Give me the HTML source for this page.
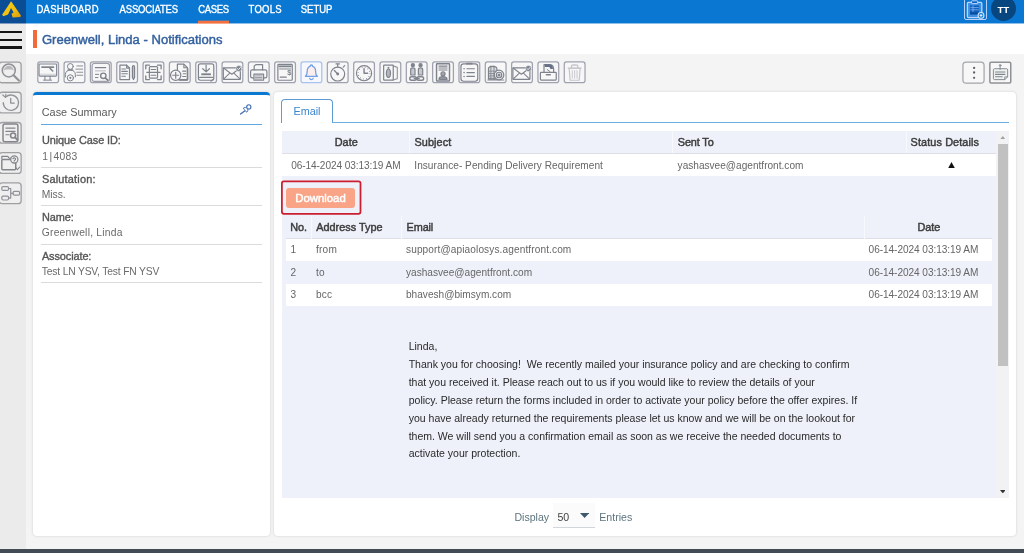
<!DOCTYPE html>
<html lang="en">
<head>
<meta charset="utf-8">
<title>Greenwell, Linda - Notifications</title>
<style>
*{box-sizing:border-box;margin:0;padding:0}
html,body{width:1024px;height:553px;overflow:hidden}
body{position:relative;background:#f4f4f4;font-family:"Liberation Sans",sans-serif;font-size:11px;color:#444}
.a,.t{position:absolute}
.t{white-space:pre;display:block}
.ib{position:absolute;width:22.6px;height:22.6px;border:1.5px solid #9a9dab;border-radius:2.5px;background:#f7f7f8}
.ib svg{position:absolute;left:-1.2px;top:-1.2px;width:22px;height:22px;overflow:visible}
.sb{position:absolute;left:-2px;width:24px;height:22px;border:1.3px solid #a0a0a3;border-radius:3px;background:#efefef}
.sb svg{position:absolute;left:.7px;top:-1.3px;width:22px;height:22px;overflow:visible}
.card{position:absolute;background:#fff;border-radius:4px;box-shadow:0 0 2.5px rgba(0,0,0,.17)}
.hr{position:absolute;height:1px;background:#dbdbdb;left:41px;width:221px}
svg *{vector-effect:none}
</style>
</head>
<body>
<div id="app" style="position:absolute;left:0;top:0;width:1024px;height:553px;will-change:transform">
<div class="a" style="left:0;top:0;width:1024px;height:23px;background:#0a78d3"></div>
<div class="a" style="left:0;top:0;width:26px;height:23px;background:#0b4d94"></div>
<div class="a" style="left:0;top:23px;width:26px;height:526px;background:#ebebeb"></div>
<div class="a" style="left:26px;top:23px;width:998px;height:30.800px;background:#fff"></div>
<div class="a" style="left:26px;top:23px;width:998px;height:1px;background:#8cc0ea"></div>
<div class="a" style="left:0;top:23px;width:26px;height:1px;background:#7b9cc0"></div>
<div class="a" style="left:0;top:549.1px;width:1024px;height:4px;background:#424b53"></div>

<!-- nav underline -->
<div class="a" style="left:198px;top:21px;width:31px;height:2px;background:#f4703f"></div>
<div class="a" style="left:198px;top:23px;width:31px;height:1px;background:#f8a98c"></div>
<div class="a" style="left:198px;top:20px;width:31px;height:1px;background:#5577a8"></div>
<!-- title accent -->
<div class="a" style="left:33.4px;top:30.2px;width:3.2px;height:18.3px;background:#f26a3b"></div>
<!-- hamburger -->
<div class="a" style="left:0;top:31.3px;width:22.3px;height:2.2px;background:#141414"></div>
<div class="a" style="left:0;top:38.9px;width:22.3px;height:2.2px;background:#141414"></div>
<div class="a" style="left:0;top:46.4px;width:22.3px;height:2.2px;background:#141414"></div>

<!-- LEFT CARD -->
<div class="card" style="left:33.3px;top:91.5px;width:236.400px;height:444.500px;border-top:3.2px solid #0b78d1"></div>
<div class="a" style="left:41px;top:124.3px;width:221px;height:1.1px;background:#62a8e0"></div>
<div class="hr" style="top:166.7px"></div>
<div class="hr" style="top:205.2px"></div>
<div class="hr" style="top:243.7px"></div>
<div class="hr" style="top:282.2px"></div>

<svg class="a" style="left:240px;top:104.4px" width="12" height="11" viewBox="0 0 12 11" fill="none" stroke="#3f6db3" stroke-linecap="round" stroke-linejoin="round"><path d="M4.700 6.900L.5 10" stroke-width="1.300"/><path d="M3.800 5.200l3 3 1-1.600-.2-.8 1.200-1.200-2.200-2.200-1.200 1.200-.8-.2z" stroke-width="1" fill="#fff"/><circle cx="8.800" cy="2.900" r="2.100" stroke-width="1.100" fill="#fff"/></svg>
<!-- RIGHT CARD -->
<div class="card" style="left:274.200px;top:91.500px;width:742.300px;height:444.500px"></div>
<div class="a" style="left:281.3px;top:99px;width:51.4px;height:24.2px;border:1.2px solid #5f9bd3;border-bottom:none;border-radius:4px 4px 0 0;background:#fff"></div>
<div class="a" style="left:331.5px;top:122.2px;width:677.5px;height:1.2px;background:#6aaee3"></div>

<!-- outer table -->
<div class="a" style="left:281.5px;top:131px;width:727.5px;height:22.6px;background:#eef1f9"></div>
<div class="a" style="left:281.5px;top:153.2px;width:714.300px;height:.8px;background:#dcdfe6"></div>
<div class="a" style="left:281.5px;top:154px;width:714.300px;height:22px;background:#fff"></div>
<div class="a" style="left:281.5px;top:176px;width:716px;height:321.8px;background:#eef1fa"></div>
<div class="a" style="left:409.2px;top:131px;width:1px;height:22px;background:#f8f9fd"></div>
<div class="a" style="left:672px;top:131px;width:1px;height:22px;background:#f8f9fd"></div>
<div class="a" style="left:905.5px;top:131px;width:1px;height:22px;background:#f8f9fd"></div>
<svg class="a" style="left:948px;top:161.8px" width="7" height="6.4" viewBox="0 0 7 6.4"><path d="M3.5 0L7 6.4H0z" fill="#111"/></svg>

<!-- download -->
<svg class="a" style="left:279px;top:178px" width="86" height="40" viewBox="279 178 86 40"><rect x="281.900" y="181.350" width="78.600" height="32.500" rx="2" fill="none" stroke="#cb1f30" stroke-width="1.750"/></svg>
<div class="a" style="left:286.2px;top:187.6px;width:68.8px;height:20.3px;background:#f9a487;border-radius:3px"></div>

<!-- inner table -->
<div class="a" style="left:285.8px;top:238px;width:706.4px;height:.8px;background:#dcdfe6"></div>
<div class="a" style="left:285.8px;top:238.8px;width:706.4px;height:22.4px;background:#fff"></div>
<div class="a" style="left:285.8px;top:283.8px;width:706.4px;height:22px;background:#fff"></div>
<div class="a" style="left:311px;top:215.5px;width:1px;height:23px;background:#f8f9fd"></div>
<div class="a" style="left:401px;top:215.5px;width:1px;height:23px;background:#f8f9fd"></div>
<div class="a" style="left:864px;top:215.5px;width:1px;height:23px;background:#f8f9fd"></div>

<!-- scrollbar -->
<div class="a" style="left:996px;top:131px;width:13px;height:366.800px;background:#f2f2f5"></div>
<div class="a" style="left:998px;top:143.5px;width:9.600px;height:222.500px;background:#c1c1c1"></div>
<svg class="a" style="left:999.8px;top:135.5px" width="5.6" height="3.4" viewBox="0 0 5.6 3.4"><path d="M2.8 0L5.6 3.4H0z" fill="#a3a3a3"/></svg>
<svg class="a" style="left:999.8px;top:489.5px" width="5.6" height="3.4" viewBox="0 0 5.6 3.4"><path d="M0 0H5.6L2.8 3.4z" fill="#333"/></svg>

<!-- footer select -->
<div class="a" style="left:553px;top:503px;width:41.5px;height:24.5px;background:#fbfbfb;border-bottom:1px solid #d2d5d9"></div>
<svg class="a" style="left:579.6px;top:512.6px" width="9.2" height="5.2" viewBox="0 0 9.2 5.2"><path d="M0 0H9.2L4.6 4.900z" fill="#3c5a6c"/></svg>

<svg class="a" style="left:0;top:0;overflow:hidden" width="1024" height="553" viewBox="0 0 1024 553"><g transform="translate(37.15 61.35)"><rect x="0.625" y="0.625" width="20.75" height="20.75" rx="2.2" fill="#f7f7f8" stroke="#9fa2ae" stroke-width="1.25"/><g fill="none" stroke="#7f838c" stroke-width="1" stroke-linecap="round" stroke-linejoin="round"><rect x="1.900" y="2.600" width="17.600" height="12.200" rx=".8" stroke-width="1.100"/><path d="M2.400 12.900h16.600" stroke-width=".6" stroke-opacity=".55"/><path d="M4.200 5.800H17" stroke-width="1.700" stroke-linecap="butt"/><path d="M12.900 7l2.700 2.700" stroke-width="1.500"/><path d="M7.800 15v3.400M12.900 15v3.400M6.400 18.800h8"/></g></g><g transform="translate(63.47 61.35)"><rect x="0.625" y="0.625" width="20.75" height="20.75" rx="2.2" fill="#f7f7f8" stroke="#9fa2ae" stroke-width="1.25"/><g fill="none" stroke="#7f838c" stroke-width="1" stroke-linecap="round" stroke-linejoin="round"><circle cx="6.900" cy="5.100" r="2.900"/><path d="M1.900 15.600v-2.400c0-2.800 2-4.400 5-4.400s5 1.600 5 4.400v2.400"/><path d="M4.600 8.600h4.600" stroke-width="1.300"/><circle cx="6.900" cy="16.500" r="3.100" fill="#f7f7f8"/><circle cx="6.900" cy="16.500" r="1.100" fill="#7f838c" stroke="none"/><path d="M13.400 4.600h5.800M12.400 7.800h6.800M13.400 10.900h5.800M13.400 13.900h5.800" stroke-width=".9"/></g></g><g transform="translate(89.80 61.35)"><rect x="0.625" y="0.625" width="20.75" height="20.75" rx="2.2" fill="#f7f7f8" stroke="#9fa2ae" stroke-width="1.25"/><g fill="none" stroke="#7f838c" stroke-width="1" stroke-linecap="round" stroke-linejoin="round"><rect x="2.300" y="2.100" width="17.400" height="18" rx="2.200" stroke-opacity=".75" stroke-width="1.200"/><path d="M5.600 6.300h10.200" stroke-width="1.400"/><path d="M5.600 9.500h10.200" stroke-width=".9" stroke-opacity=".6"/><path d="M5.600 13h3.200M5.600 16.200h2.600" stroke-width="1"/><circle cx="13.500" cy="14.500" r="2.700" stroke-width="1.400"/><path d="M15.700 16.700l2.300 2.100" stroke-width="1.800"/></g></g><g transform="translate(116.12 61.35)"><rect x="0.625" y="0.625" width="20.75" height="20.75" rx="2.2" fill="#f7f7f8" stroke="#9fa2ae" stroke-width="1.25"/><g fill="none" stroke="#7f838c" stroke-width="1" stroke-linecap="round" stroke-linejoin="round" transform="translate(11 11) scale(1.2) translate(-11 -11)"><path d="M5 5h5.6l2.4 2.4V17H5z"/><path d="M10.6 5v2.4H13"/><path d="M6.6 8.2h3M6.6 10.2h4.6M6.6 12.2h4.6M6.6 14.2h3" stroke-width=".9"/><path d="M15.4 6.6c0-1.6 1.8-1.6 1.8 0V15l-.9 2-.9-2z" fill="#7f838c" fill-opacity=".45"/></g></g><g transform="translate(142.45 61.35)"><rect x="0.625" y="0.625" width="20.75" height="20.75" rx="2.2" fill="#f7f7f8" stroke="#9fa2ae" stroke-width="1.25"/><g fill="none" stroke="#7f838c" stroke-width="1" stroke-linecap="round" stroke-linejoin="round" transform="translate(11 11) scale(1.2) translate(-11 -11)"><path d="M4.6 8V5h3M14.4 5h3v3M17.4 14v3h-3M7.6 17h-3v-3" stroke-width="1.1"/><rect x="7.6" y="6.2" width="6.8" height="9.6" rx=".8"/><path d="M5.4 11h11.2M9 8.6h4M9 13.4h4" stroke-width=".9"/></g></g><g transform="translate(168.78 61.35)"><rect x="0.625" y="0.625" width="20.75" height="20.75" rx="2.2" fill="#f7f7f8" stroke="#9fa2ae" stroke-width="1.25"/><g fill="none" stroke="#7f838c" stroke-width="1" stroke-linecap="round" stroke-linejoin="round" transform="translate(11 11) scale(1.2) translate(-11 -11)"><path d="M9 16.800V4.200h5.400l3 3V17z" fill="#f7f7f8"/><path d="M14.400 4.200v3h3" stroke-width=".9"/><path d="M10 17.300h7.600" stroke-width="1.600" stroke-linecap="butt"/><path d="M17.500 8v9" stroke-width="1.300"/><path d="M13.400 10h2.600M13.800 12.200h2.200M13.400 14.400h2.600" stroke-width=".9"/><circle cx="7.600" cy="13.400" r="4.300" fill="#f7f7f8"/><path d="M7.600 10.900v5M5.100 13.400h5"/></g></g><g transform="translate(195.10 61.35)"><rect x="0.625" y="0.625" width="20.75" height="20.75" rx="2.2" fill="#f7f7f8" stroke="#9fa2ae" stroke-width="1.25"/><g fill="none" stroke="#7f838c" stroke-width="1" stroke-linecap="round" stroke-linejoin="round" transform="translate(11 11) scale(1.2) translate(-11 -11)"><rect x="4.6" y="4" width="12.8" height="13.6" rx="1.6"/><path d="M11 5v5.400M8.200 8l2.800 2.600 2.800-2.600"/><path d="M7 12.6h8" stroke-width="1.6" stroke-linecap="butt"/><path d="M5.6 15.2h10.8" stroke-width=".9"/><path d="M15 18.4l2-1.6" stroke-width=".9"/></g></g><g transform="translate(221.43 61.35)"><rect x="0.625" y="0.625" width="20.75" height="20.75" rx="2.2" fill="#f7f7f8" stroke="#9fa2ae" stroke-width="1.25"/><g fill="none" stroke="#7f838c" stroke-width="1" stroke-linecap="round" stroke-linejoin="round" transform="translate(11 11) scale(1.2) translate(-11 -11)"><rect x="3.400" y="7.200" width="14.200" height="9.600" rx=".4"/><path d="M3.600 7.400l6.900 5.200 6.900-5.200M3.600 16.600l5.200-5M17.400 16.600l-5.200-5" stroke-width=".9"/><circle cx="16.400" cy="7.800" r="2.500" fill="#7f8491" stroke="#f7f7f8" stroke-width=".4"/><path d="M15.300 7.900l.8.800 1.500-1.700" stroke="#f7f7f8" stroke-width=".8"/></g></g><g transform="translate(247.75 61.35)"><rect x="0.625" y="0.625" width="20.75" height="20.75" rx="2.2" fill="#f7f7f8" stroke="#9fa2ae" stroke-width="1.25"/><g fill="none" stroke="#7f838c" stroke-width="1" stroke-linecap="round" stroke-linejoin="round" transform="translate(11 11) scale(1.2) translate(-11 -11)"><path d="M7.2 9V5.6l1.4-1h5.6V9"/><rect x="4.2" y="9" width="13.6" height="6.6" rx="1.4"/><rect x="7" y="12.4" width="8" height="5.2" fill="#f7f7f8"/><path d="M8.2 14h5.6M8.2 15.4h5.6M8.2 16.6h5.6" stroke-width=".7"/></g></g><g transform="translate(274.07 61.35)"><rect x="0.625" y="0.625" width="20.75" height="20.75" rx="2.2" fill="#f7f7f8" stroke="#9fa2ae" stroke-width="1.25"/><g fill="none" stroke="#7f838c" stroke-width="1" stroke-linecap="round" stroke-linejoin="round" transform="translate(11 11) scale(1.2) translate(-11 -11)"><rect x="5" y="4.4" width="12" height="13.2" rx=".6"/><path d="M5.6 6h10.8" stroke-width="1.5" stroke-linecap="butt"/><path d="M6.4 8.2h9.2" stroke-width=".8"/><path d="M7 15h5" stroke-width="1"/><text x="12.900" y="13" font-family="Liberation Sans,sans-serif" font-size="6.200" font-weight="bold" fill="#7f838c" stroke="none">$</text></g></g><g transform="translate(300.40 61.35)"><rect x="0.625" y="0.625" width="20.75" height="20.75" rx="2.2" fill="#f6f8fd" stroke="#a8c2ee" stroke-width="1.25"/><g fill="none" stroke="#72a0e4" stroke-width="1.2" stroke-linecap="round" stroke-linejoin="round" transform="translate(11 11) scale(1.08) translate(-11 -11)"><path d="M11 4.2c.9 0 1.2.6 1.2 1.3 2 .7 2.7 2.4 2.7 4.6 0 2.600.6 3.800 1.600 4.600H5.500c1-.8 1.600-2 1.600-4.600 0-2.200.7-3.900 2.700-4.600 0-.7.300-1.300 1.200-1.300z" fill="#fdeeee"/><path d="M9.400 16.600a1.700 1.700 0 0 0 3.200 0"/></g></g><g transform="translate(326.72 61.35)"><rect x="0.625" y="0.625" width="20.75" height="20.75" rx="2.2" fill="#f7f7f8" stroke="#9fa2ae" stroke-width="1.25"/><g fill="none" stroke="#7f838c" stroke-width="1" stroke-linecap="round" stroke-linejoin="round" transform="translate(11 11) scale(1.2) translate(-11 -11)"><circle cx="11" cy="12.4" r="5.8"/><path d="M9.600 4h2.800M11 4v2.400M15.600 6.600l1.200-1.200"/><path d="M8.200 9.400l2.800 3" stroke-width="1.1"/><circle cx="11" cy="12.400" r=".7" fill="#7f838c"/></g></g><g transform="translate(353.05 61.35)"><rect x="0.625" y="0.625" width="20.75" height="20.75" rx="2.2" fill="#f7f7f8" stroke="#9fa2ae" stroke-width="1.25"/><g fill="none" stroke="#7f838c" stroke-width="1" stroke-linecap="round" stroke-linejoin="round" transform="translate(11 11) scale(1.2) translate(-11 -11)"><circle cx="11" cy="11.700" r="6.300"/><path d="M11 8v3.700h3" stroke-width="1.200"/><circle cx="11" cy="11.700" r="4.900" stroke-width=".9" stroke-dasharray=".6 1.966" stroke-linecap="butt"/></g></g><g transform="translate(379.37 61.35)"><rect x="0.625" y="0.625" width="20.75" height="20.75" rx="2.2" fill="#f7f7f8" stroke="#9fa2ae" stroke-width="1.25"/><g fill="none" stroke="#7f838c" stroke-width="1" stroke-linecap="round" stroke-linejoin="round" transform="translate(11 11) scale(1.2) translate(-11 -11)"><rect x="5.400" y="5" width="8" height="12.400" rx=".5"/><path d="M13.400 5.600l3.400 1.200v9.400l-3.400 1.200" stroke-opacity=".8"/><path d="M9.400 8.200c1 0 1.700 1.800 1.700 3.600s-.7 3.400-1.700 3.400-1.700-1.600-1.700-3.400.7-3.600 1.700-3.600z" fill="#7f838c" fill-opacity=".55" stroke-width="1"/><circle cx="9.400" cy="7.200" r=".8" fill="#7f838c" stroke="none"/></g></g><g transform="translate(405.70 61.35)"><rect x="0.625" y="0.625" width="20.75" height="20.75" rx="2.2" fill="#f7f7f8" stroke="#9fa2ae" stroke-width="1.25"/><g fill="none" stroke="#7f838c" stroke-width="1" stroke-linecap="round" stroke-linejoin="round" transform="translate(11 11) scale(1.2) translate(-11 -11)"><circle cx="7.800" cy="5" r="1.300" fill="#7f838c"/><circle cx="14.200" cy="5" r="1.300" fill="#7f838c"/><path d="M6 13.200V8.800c0-2 3.600-2 3.600 0v4.400zM12.400 13.200V8.800c0-2 3.600-2 3.600 0v4.400z" fill="#7f838c" fill-opacity=".4"/><rect x="5.200" y="14.600" width="5.600" height="3" rx="1.500" stroke-width="1.200"/><rect x="11.200" y="14.600" width="5.600" height="3" rx="1.500" stroke-width="1.200"/><path d="M9 16.100h4" stroke-width="1.200"/></g></g><g transform="translate(432.02 61.35)"><rect x="0.625" y="0.625" width="20.75" height="20.75" rx="2.2" fill="#f7f7f8" stroke="#9fa2ae" stroke-width="1.25"/><g fill="none" stroke="#7f838c" stroke-width="1" stroke-linecap="round" stroke-linejoin="round" transform="translate(11 11) scale(1.2) translate(-11 -11)"><rect x="5.600" y="3.800" width="10.800" height="14.400" rx=".5" stroke-width="1.200"/><path d="M7.600 5.800h6.800M7.600 7.400h6.800M7.600 9h6.800" stroke-width=".9"/><circle cx="11" cy="12.200" r="1.700" fill="#7f838c" fill-opacity=".7"/><path d="M7.600 16.800c0-3 6.800-3 6.800 0z" fill="#7f838c" fill-opacity=".8"/></g></g><g transform="translate(458.35 61.35)"><rect x="0.625" y="0.625" width="20.75" height="20.75" rx="2.2" fill="#f7f7f8" stroke="#9fa2ae" stroke-width="1.25"/><g fill="none" stroke="#7f838c" stroke-width="1" stroke-linecap="round" stroke-linejoin="round" transform="translate(11 11) scale(1.2) translate(-11 -11)"><rect x="4" y="4" width="14" height="14.400" rx="2.200"/><path d="M9 3.800h4" stroke-width="1.500"/><path d="M9 8h6.200M9 11.200h6.200M9 14.400h6.200" stroke-width="1"/><path d="M6.600 8v.01M6.600 11.200v.01M6.600 14.400v.01" stroke-width="1.300"/></g></g><g transform="translate(484.67 61.35)"><rect x="0.625" y="0.625" width="20.75" height="20.75" rx="2.2" fill="#f7f7f8" stroke="#9fa2ae" stroke-width="1.25"/><g fill="none" stroke="#7f838c" stroke-width="1" stroke-linecap="round" stroke-linejoin="round" transform="translate(11 11) scale(1.2) translate(-11 -11)"><path d="M5 8c0-2.600 7-2.600 7 0v8.600H5z" fill="#7f838c" fill-opacity=".25"/><path d="M5 10h7M5 12h7M5 14h7M5 16h7M7 5.600v11M9.600 5.600v11" stroke-width=".7"/><circle cx="13.800" cy="13.200" r="4" fill="#f7f7f8"/><circle cx="13.800" cy="13.200" r="2.300"/><circle cx="13.800" cy="13.200" r=".8" fill="#7f838c"/><path d="M4.400 17.400h13.400" stroke-width=".8"/></g></g><g transform="translate(511.00 61.35)"><rect x="0.625" y="0.625" width="20.75" height="20.75" rx="2.2" fill="#f7f7f8" stroke="#9fa2ae" stroke-width="1.25"/><g fill="none" stroke="#7f838c" stroke-width="1" stroke-linecap="round" stroke-linejoin="round" transform="translate(11 11) scale(1.2) translate(-11 -11)"><rect x="3.400" y="7.200" width="14.200" height="9.600" rx=".4"/><path d="M3.600 7.400l6.900 5.200 6.900-5.200M3.600 16.600l5.200-5M17.400 16.600l-5.200-5" stroke-width=".9"/><circle cx="16.400" cy="7.800" r="2.500" fill="#7f8491" stroke="#f7f7f8" stroke-width=".4"/><path d="M15.300 7.900l.8.800 1.500-1.700" stroke="#f7f7f8" stroke-width=".8"/></g></g><g transform="translate(537.33 61.35)"><rect x="0.625" y="0.625" width="20.75" height="20.75" rx="2.2" fill="#f7f7f8" stroke="#9fa2ae" stroke-width="1.25"/><g fill="none" stroke="#7f838c" stroke-width="1" stroke-linecap="round" stroke-linejoin="round" transform="translate(11 11) scale(1.2) translate(-11 -11)"><path d="M7.400 11V4.600h4.400c2.400 0 3.600 1.600 3.600 3.600V11" /><path d="M8 5.400h3.400c1.600 0 2.400 1 2.400 2.800" stroke-width="2.200" stroke="#667086" stroke-linecap="butt"/><path d="M10 8.600l2.400 1.800" stroke-width=".8"/><rect x="4.400" y="11" width="13.200" height="6.400" rx=".6" fill="#f7f7f8"/><path d="M9.400 13h3.200" stroke-width="1.300"/></g></g><g transform="translate(563.65 61.35)"><rect x="0.625" y="0.625" width="20.75" height="20.75" rx="2.2" fill="#f7f7f8" stroke="#9fa2ae" stroke-width="1.25"/><g fill="none" stroke="#c3c5c9" stroke-width="1" stroke-linecap="round" stroke-linejoin="round" transform="translate(11 11) scale(1.2) translate(-11 -11)"><path d="M6.400 7.600h9.200l-.8 10H7.200z"/><path d="M5.600 7.400h10.800M8.400 7V5.400c0-.8 5.200-.8 5.200 0V7"/><path d="M9 9.600v6.200M11 9.600v6.200M13 9.600v6.200" stroke-width=".8"/></g></g><g transform="translate(962.30 61.50)"><rect x="0.625" y="0.625" width="21.15" height="21.05" rx="3.2" fill="#f7f7f8" stroke="#a3a6ab" stroke-width="1.25"/><circle cx="11.800" cy="6.400" r="1.150" fill="#5d6166"/><circle cx="11.800" cy="11" r="1.150" fill="#5d6166"/><circle cx="11.800" cy="16.300" r="1.150" fill="#5d6166"/></g><g transform="translate(989.10 61.50)"><rect x="0.75" y="0.75" width="20.9" height="20.8" rx="1.2" fill="#f7f7f8" stroke="#8e9196" stroke-width="1.5"/><g fill="none" stroke="#7f838c" stroke-width="1" stroke-linecap="round" stroke-linejoin="round" transform="translate(11 11) scale(1.05) translate(-11 -11)"><path d="M4.600 8.400c0-.6.300-1 1-1h11.600c.6 0 1 .4 1 1v6.800l-2.800 2.600H5.600c-.7 0-1-.4-1-1z" fill="#eef3f1" stroke-width=".9"/><path d="M18 15.200h-2.600v2.400" stroke-width=".8"/><path d="M6.600 10.600h9M6.600 12.800h9M6.600 15h6.400" stroke-width="1"/><path d="M11 4.600v3.600" stroke-width=".8"/><circle cx="11" cy="4.200" r=".9" stroke-width=".7"/></g></g><g transform="translate(-1.60 61.40)"><rect x="0.65" y="0.65" width="22.099999999999998" height="20.7" rx="3" fill="#efefef" stroke="#a0a0a3" stroke-width="1.3"/><g transform="translate(1.300 0)"><g fill="none" stroke="#8f9297" stroke-width="1" stroke-linecap="round" stroke-linejoin="round" transform="translate(11 11) scale(1.2) translate(-11 -11)"><circle cx="9.400" cy="9.400" r="5.400" stroke-width="1.300"/><path d="M13.400 13.400l4.400 4.400" stroke-width="1.800"/><path d="M5.400 9.600c0-2.800 2.400-4.200 4-4.200s4 1.400 4 4.200c-1.200-1.600-2.400-1-4-1s-2.800-.6-4 1z" fill="#8a8d92" fill-opacity=".55" stroke="none"/></g></g></g><g transform="translate(-1.60 91.62)"><rect x="0.65" y="0.65" width="22.099999999999998" height="20.7" rx="3" fill="#efefef" stroke="#a0a0a3" stroke-width="1.3"/><g transform="translate(1.300 0)"><g fill="none" stroke="#8f9297" stroke-width="1" stroke-linecap="round" stroke-linejoin="round" transform="translate(11 11) scale(1.2) translate(-11 -11)"><path d="M4.800 11a6.400 6.400 0 1 0 2-4.600" stroke-width="1.100"/><path d="M4.400 4.600l2.200 2 .4-2.600" stroke-width="1" fill="none"/><path d="M11 7.400V11.400h3" stroke-width="1.100"/></g></g></g><g transform="translate(-1.60 121.84)"><rect x="0.65" y="0.65" width="22.099999999999998" height="20.7" rx="3" fill="#efefef" stroke="#a0a0a3" stroke-width="1.3"/><g transform="translate(1.300 0)"><g fill="none" stroke="#82858a" stroke-width="1" stroke-linecap="round" stroke-linejoin="round" transform="translate(11 11) scale(1.2) translate(-11 -11)"><rect x="4.600" y="3.600" width="12.400" height="14.800" rx="1.600" stroke-width="1.200"/><path d="M7 7h7.600M7 9.800h7.600M7 12.600h2.600" stroke-width="1"/><circle cx="13" cy="13.200" r="2.100" stroke-width="1.300"/><path d="M14.600 14.800l2 2" stroke-width="1.600"/></g></g></g><g transform="translate(-1.60 152.06)"><rect x="0.65" y="0.65" width="22.099999999999998" height="20.7" rx="3" fill="#efefef" stroke="#a0a0a3" stroke-width="1.3"/><g transform="translate(1.300 0)"><g fill="none" stroke="#82858a" stroke-width="1" stroke-linecap="round" stroke-linejoin="round" transform="translate(11 11) scale(1.2) translate(-11 -11)"><path d="M3.600 7.400V5.400h5l1.200 1.600h5.400v2"/><rect x="3.600" y="8" width="11.600" height="8.600" rx=".8" stroke-width="1.200"/><circle cx="14" cy="8" r="3" fill="#efefef"/><path d="M12.800 7.400c.8-1.400 2.600-.6 2.200.6l-1.200 1.400M13.800 10.600v.2" stroke-width=".9"/><path d="M15.400 15l1.200 1.600 1.800-2.200" stroke-width=".9"/></g></g></g><g transform="translate(-1.60 182.28)"><rect x="0.65" y="0.65" width="22.099999999999998" height="20.7" rx="3" fill="#efefef" stroke="#a0a0a3" stroke-width="1.3"/><g transform="translate(1.300 0)"><g fill="none" stroke="#8f9297" stroke-width="1" stroke-linecap="round" stroke-linejoin="round" transform="translate(11 11) scale(1.2) translate(-11 -11)"><rect x="3.600" y="5.400" width="5.600" height="3.200" rx="1"/><rect x="3.600" y="13.400" width="5.600" height="3.200" rx="1"/><rect x="13" y="9.400" width="5.400" height="3.200" rx="1"/><path d="M9.200 7h1.800v8H9.200M11 11h2"/></g></g></g></svg>
<div class="a" style="left:964px;top:-2px;width:23px;height:22px;border:1.3px solid #b5d1fb;border-radius:2px"></div>
<svg class="a" style="left:964px;top:0" width="23" height="20" viewBox="0 0 23 20" fill="none" stroke="#b9d5fa" stroke-width="1.300" stroke-linejoin="round"><rect x="3.400" y="2.400" width="14.400" height="15.200" rx="1" fill="#3f8fe4"/><rect x="6" y="5.400" width="9.200" height="9" fill="#0d5fbd" stroke="none"/><path d="M6.400 7.600h8.400M6.400 9.800h8.400M9 5.600v6.400" stroke-width=".7" stroke="#8fbdf3"/><path d="M6 13.400h9.200" stroke="#0a4a9a" stroke-width="2"/><rect x="7.600" y=".8" width="6" height="2.800" rx=".6" fill="#0a63c4" stroke-width="1"/><circle cx="17" cy="15.400" r="2.900" fill="#0a78d3" stroke="#cfe2fb" stroke-width="1.100"/><path d="M17 13.900v3M15.500 15.400h3" stroke="#e3eefc" stroke-width="1"/></svg>
<div class="a" style="left:990.5px;top:-4.400px;width:25.400px;height:25.400px;border-radius:50%;background:#07467f"></div>
<svg class="a" style="left:0;top:0" width="26" height="23" viewBox="0 0 26 23"><defs><linearGradient id="lg" x1="0" y1="0" x2="1" y2="1"><stop offset="0" stop-color="#f7d21c"/><stop offset=".6" stop-color="#f0bd10"/><stop offset="1" stop-color="#d99a0a"/></linearGradient></defs><path d="M11.100 1.200L2.100 14.700 3.300 16.300 8.100 14.500 11 8 13.700 12.600 11.500 13.700 12.700 17.500 20.400 17.100 20.900 15.500z" fill="url(#lg)"/></svg>
<span class="t" style="left:36.45px;top:2px;font-size:9.50px;line-height:15px;color:#fff;transform-origin:0 11px;transform:scaleY(1.161);-webkit-text-stroke:0.3px #fff;letter-spacing:0.247px;">DASHBOARD</span>
<span class="t" style="left:119.55px;top:2px;font-size:9.50px;line-height:15px;color:#fff;transform-origin:0 11px;transform:scaleY(1.161);-webkit-text-stroke:0.3px #fff;letter-spacing:-0.171px;">ASSOCIATES</span>
<span class="t" style="left:198.15px;top:2px;font-size:9.50px;line-height:15px;color:#fff;transform-origin:0 11px;transform:scaleY(1.161);-webkit-text-stroke:0.3px #fff;letter-spacing:-0.341px;">CASES</span>
<span class="t" style="left:248.55px;top:2px;font-size:9.50px;line-height:15px;color:#fff;transform-origin:0 11px;transform:scaleY(1.161);-webkit-text-stroke:0.3px #fff;letter-spacing:0.254px;">TOOLS</span>
<span class="t" style="left:300.75px;top:2px;font-size:9.50px;line-height:15px;color:#fff;transform-origin:0 11px;transform:scaleY(1.161);-webkit-text-stroke:0.3px #fff;letter-spacing:-0.015px;">SETUP</span>
<span class="t" style="left:41.98px;top:30px;font-size:13.06px;line-height:19px;color:#34619f;-webkit-text-stroke:0.45px #34619f;">Greenwell, Linda - Notifications</span>
<span class="t" style="left:997.40px;top:2px;font-size:9.74px;line-height:15px;color:#fff;font-weight:bold;">TT</span>
<span class="t" style="left:41.75px;top:104px;font-size:10.89px;line-height:16px;color:#5a5a5a;transform-origin:0 12px;transform:scaleY(0.975);">Case Summary</span>
<span class="t" style="left:41.93px;top:132px;font-size:10.91px;line-height:16px;color:#565656;-webkit-text-stroke:0.36px #565656;letter-spacing:-0.077px;">Unique Case ID:</span>
<span class="t" style="left:42.20px;top:149px;font-size:10.32px;line-height:15px;color:#6a6a6a;transform-origin:0 11px;transform:scaleY(1.069);letter-spacing:-1.542px;">1</span>
<span class="t" style="left:49.40px;top:149px;font-size:10.32px;line-height:15px;color:#6a6a6a;transform-origin:0 11px;transform:scaleY(1.069);letter-spacing:-1.482px;">|</span>
<span class="t" style="left:53.50px;top:149px;font-size:10.32px;line-height:15px;color:#6a6a6a;transform-origin:0 11px;transform:scaleY(1.069);letter-spacing:0.234px;">4083</span>
<span class="t" style="left:41.93px;top:171px;font-size:10.91px;line-height:16px;color:#565656;-webkit-text-stroke:0.36px #565656;letter-spacing:0.212px;">Salutation:</span>
<span class="t" style="left:41.75px;top:187px;font-size:10.32px;line-height:15px;color:#6a6a6a;transform-origin:0 11px;transform:scaleY(1.069);letter-spacing:-0.027px;">Miss.</span>
<span class="t" style="left:41.93px;top:209px;font-size:10.91px;line-height:16px;color:#565656;-webkit-text-stroke:0.36px #565656;letter-spacing:-0.048px;">Name:</span>
<span class="t" style="left:41.75px;top:225px;font-size:10.32px;line-height:15px;color:#6a6a6a;transform-origin:0 11px;transform:scaleY(1.069);letter-spacing:0.218px;">Greenwell, Linda</span>
<span class="t" style="left:41.93px;top:248px;font-size:10.91px;line-height:16px;color:#565656;-webkit-text-stroke:0.36px #565656;letter-spacing:-0.094px;">Associate:</span>
<span class="t" style="left:41.75px;top:264px;font-size:10.32px;line-height:15px;color:#6a6a6a;transform-origin:0 11px;transform:scaleY(1.069);letter-spacing:-0.178px;">Test LN YSV, Test FN YSV</span>
<span class="t" style="left:293.50px;top:103px;font-size:10.80px;line-height:16px;color:#3a86cf;transform-origin:0 12px;transform:scaleY(1.022);">Email</span>
<span class="t" style="left:334.73px;top:134px;font-size:10.88px;line-height:16px;color:#3c3c3c;transform-origin:0 12px;transform:scaleY(1.014);-webkit-text-stroke:0.45px #3c3c3c;letter-spacing:0.018px;">Date</span>
<span class="t" style="left:414.53px;top:134px;font-size:10.88px;line-height:16px;color:#3c3c3c;transform-origin:0 12px;transform:scaleY(1.014);-webkit-text-stroke:0.45px #3c3c3c;letter-spacing:0.067px;">Subject</span>
<span class="t" style="left:677.83px;top:134px;font-size:10.88px;line-height:16px;color:#3c3c3c;transform-origin:0 12px;transform:scaleY(1.014);-webkit-text-stroke:0.45px #3c3c3c;letter-spacing:-0.134px;">Sent To</span>
<span class="t" style="left:910.62px;top:134px;font-size:10.88px;line-height:16px;color:#3c3c3c;transform-origin:0 12px;transform:scaleY(1.014);-webkit-text-stroke:0.45px #3c3c3c;letter-spacing:0.096px;">Status Details</span>
<span class="t" style="left:291.20px;top:158px;font-size:10.10px;line-height:15px;color:#666;transform-origin:0 11px;transform:scaleY(1.092);letter-spacing:-0.082px;">06-14-2024 03:13:19 AM</span>
<span class="t" style="left:414.30px;top:158px;font-size:10.10px;line-height:15px;color:#666;transform-origin:0 11px;transform:scaleY(1.092);letter-spacing:0.030px;">Insurance- Pending Delivery Requirement</span>
<span class="t" style="left:677.60px;top:158px;font-size:10.10px;line-height:15px;color:#666;transform-origin:0 11px;transform:scaleY(1.092);letter-spacing:-0.001px;">yashasvee@agentfront.com</span>
<span class="t" style="left:295.23px;top:190px;font-size:11.37px;line-height:16px;color:#fff;transform-origin:0 12px;transform:scaleY(0.934);-webkit-text-stroke:0.45px #fff;">Download</span>
<span class="t" style="left:290.23px;top:219px;font-size:10.88px;line-height:16px;color:#3c3c3c;transform-origin:0 12px;transform:scaleY(1.014);-webkit-text-stroke:0.45px #3c3c3c;letter-spacing:-0.026px;">No.</span>
<span class="t" style="left:316.23px;top:219px;font-size:10.88px;line-height:16px;color:#3c3c3c;transform-origin:0 12px;transform:scaleY(1.014);-webkit-text-stroke:0.45px #3c3c3c;letter-spacing:0.003px;">Address Type</span>
<span class="t" style="left:406.62px;top:219px;font-size:10.88px;line-height:16px;color:#3c3c3c;transform-origin:0 12px;transform:scaleY(1.014);-webkit-text-stroke:0.45px #3c3c3c;letter-spacing:-0.130px;">Email</span>
<span class="t" style="left:917.52px;top:219px;font-size:10.88px;line-height:16px;color:#3c3c3c;transform-origin:0 12px;transform:scaleY(1.014);-webkit-text-stroke:0.45px #3c3c3c;letter-spacing:-0.082px;">Date</span>
<span class="t" style="left:290.50px;top:242px;font-size:10.10px;line-height:15px;color:#666;transform-origin:0 11px;transform:scaleY(1.092);letter-spacing:-0.619px;">1</span>
<span class="t" style="left:316.00px;top:242px;font-size:10.10px;line-height:15px;color:#666;transform-origin:0 11px;transform:scaleY(1.092);letter-spacing:0.199px;">from</span>
<span class="t" style="left:406.00px;top:242px;font-size:10.10px;line-height:15px;color:#666;transform-origin:0 11px;transform:scaleY(1.092);letter-spacing:0.110px;">support@apiaolosys.agentfront.com</span>
<span class="t" style="left:868.60px;top:242px;font-size:10.10px;line-height:15px;color:#666;transform-origin:0 11px;transform:scaleY(1.092);letter-spacing:-0.064px;">06-14-2024 03:13:19 AM</span>
<span class="t" style="left:290.50px;top:265px;font-size:10.10px;line-height:15px;color:#666;transform-origin:0 11px;transform:scaleY(1.092);letter-spacing:-0.619px;">2</span>
<span class="t" style="left:316.00px;top:265px;font-size:10.10px;line-height:15px;color:#666;transform-origin:0 11px;transform:scaleY(1.092);letter-spacing:0.287px;">to</span>
<span class="t" style="left:406.00px;top:265px;font-size:10.10px;line-height:15px;color:#666;transform-origin:0 11px;transform:scaleY(1.092);letter-spacing:0.011px;">yashasvee@agentfront.com</span>
<span class="t" style="left:868.60px;top:265px;font-size:10.10px;line-height:15px;color:#666;transform-origin:0 11px;transform:scaleY(1.092);letter-spacing:-0.064px;">06-14-2024 03:13:19 AM</span>
<span class="t" style="left:290.50px;top:287px;font-size:10.10px;line-height:15px;color:#666;transform-origin:0 11px;transform:scaleY(1.092);letter-spacing:-0.619px;">3</span>
<span class="t" style="left:316.00px;top:287px;font-size:10.10px;line-height:15px;color:#666;transform-origin:0 11px;transform:scaleY(1.092);letter-spacing:0.193px;">bcc</span>
<span class="t" style="left:406.00px;top:287px;font-size:10.10px;line-height:15px;color:#666;transform-origin:0 11px;transform:scaleY(1.092);letter-spacing:0.009px;">bhavesh@bimsym.com</span>
<span class="t" style="left:868.60px;top:287px;font-size:10.10px;line-height:15px;color:#666;transform-origin:0 11px;transform:scaleY(1.092);letter-spacing:-0.064px;">06-14-2024 03:13:19 AM</span>
<span class="t" style="left:408.70px;top:338px;font-size:10.53px;line-height:16px;color:#2a2a2a;transform-origin:0 12px;transform:scaleY(1.088);">Linda,</span>
<span class="t" style="left:408.70px;top:356px;font-size:10.53px;line-height:16px;color:#2a2a2a;transform-origin:0 12px;transform:scaleY(1.088);letter-spacing:-0.003px;">Thank you for choosing!  We recently mailed your insurance policy and are checking to confirm</span>
<span class="t" style="left:408.70px;top:374px;font-size:10.53px;line-height:16px;color:#2a2a2a;transform-origin:0 12px;transform:scaleY(1.088);letter-spacing:-0.007px;">that you received it. Please reach out to us if you would like to review the details of your</span>
<span class="t" style="left:408.70px;top:392px;font-size:10.53px;line-height:16px;color:#2a2a2a;transform-origin:0 12px;transform:scaleY(1.088);letter-spacing:-0.001px;">policy. Please return the forms included in order to activate your policy before the offer expires. If</span>
<span class="t" style="left:408.70px;top:410px;font-size:10.53px;line-height:16px;color:#2a2a2a;transform-origin:0 12px;transform:scaleY(1.088);letter-spacing:-0.002px;">you have already returned the requirements please let us know and we will be on the lookout for</span>
<span class="t" style="left:408.70px;top:428px;font-size:10.53px;line-height:16px;color:#2a2a2a;transform-origin:0 12px;transform:scaleY(1.088);letter-spacing:-0.009px;">them. We will send you a confirmation email as soon as we receive the needed documents to</span>
<span class="t" style="left:408.70px;top:445px;font-size:10.53px;line-height:16px;color:#2a2a2a;transform-origin:0 12px;transform:scaleY(1.088);">activate your protection.</span>
<span class="t" style="left:514.40px;top:509px;font-size:10.62px;line-height:16px;color:#5d747e;transform-origin:0 12px;transform:scaleY(1.039);letter-spacing:-0.005px;">Display</span>
<span class="t" style="left:557.50px;top:509px;font-size:10.62px;line-height:16px;color:#444;transform-origin:0 12px;transform:scaleY(1.039);letter-spacing:-0.159px;">50</span>
<span class="t" style="left:599.20px;top:509px;font-size:10.62px;line-height:16px;color:#5d747e;transform-origin:0 12px;transform:scaleY(1.039);letter-spacing:0.005px;">Entries</span>
</div>
</body>
</html>
